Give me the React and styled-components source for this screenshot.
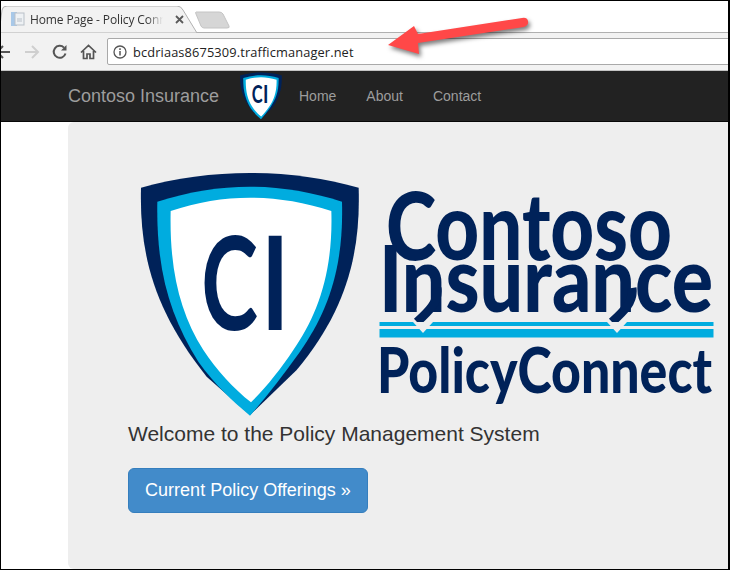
import React from "react";
import styled, { createGlobalStyle } from "styled-components";

const Global = createGlobalStyle`
  html, body { margin: 0; padding: 0; background: #fff; }
  * { box-sizing: border-box; }
`;
const Frame = styled.div`
  position: relative; width: 730px; height: 570px; overflow: hidden;
  display: flex; flex-direction: column;
  border: solid #000; border-width: 1px 2px 1px 1px;
  background: #fff; font-family: "Liberation Sans", Arial, sans-serif;
`;
const TabStrip = styled.div`
  height: 32px; flex: none; display: flex; align-items: flex-end;
  border-bottom: 1px solid #b0b0b0; background: #fff;
`;
const Tab = styled.div`
  position: relative; width: 197px; height: 27px; margin-bottom: -1px; flex: none;
  display: flex; align-items: center; padding: 0 0 1px 9px; gap: 4px;
`;
const TabShape = styled.svg`
  position: absolute; left: 0; top: 0;
`;
const TabIcon = styled.svg`
  position: relative; flex: none;
`;
const TabTitle = styled.span`
  position: relative; width: 133px; overflow: hidden; white-space: nowrap; flex: none;
  font: 12px "Open Sans", sans-serif; color: #333; letter-spacing: -0.01em;
  mask-image: linear-gradient(to right, #000 88%, transparent 100%);
`;
const TabClose = styled.svg`
  position: relative; flex: none; margin-left: 8px;
`;
const NewTab = styled.svg`
  flex: none; margin: 0 0 3px -3px;
`;
const Toolbar = styled.div`
  height: 38px; flex: none; display: flex; align-items: center; background: #f2f2f2;
  border-bottom: 1px solid #c4c4c4;
`;
const NavIcon = styled.svg`
  flex: none; margin-left: ${p => p.$ml}px;
`;
const AddressBar = styled.div`
  flex: 1; height: 27px; margin: 0 -4px 0 10px; display: flex; align-items: center;
  background: #fff; border: 1px solid #a9a9a9; border-radius: 2px; padding-left: 5px; gap: 6px;
`;
const Url = styled.span`
  font: 12.8px "Open Sans", sans-serif; color: #222; white-space: nowrap; letter-spacing: 0.01em;
`;
const Navbar = styled.nav`
  height: 51px; flex: none; display: flex; align-items: center; background: #222;
  border-bottom: 1px solid #080808; padding-left: 67px;
`;
const Brand = styled.span`
  font-size: 18px; color: #9d9d9d; width: 170px; flex: none;
`;
const NavLinks = styled.div`
  display: flex;
`;
const NavLink = styled.a`
  font-size: 14px; color: #9d9d9d; padding: 0 15px;
`;
const Main = styled.main`
  flex: 1; margin-left: 67px; background: #eee; border-radius: 6px 0 0 6px;
  padding: 48px 0 0 60px;
`;
const LogoRow = styled.div`
  display: flex; height: 249px; margin-left: 2px;
`;
const Wordmark = styled.svg`
  flex: none; margin-top: 10px;
`;
const Welcome = styled.p`
  margin: 0; font-size: 21px; line-height: 30px; color: #333; height: 30px;
`;
const Cta = styled.a`
  display: inline-flex; align-items: center; justify-content: center;
  width: 240px; height: 45px; margin-top: 19px;
  background: #428bca; border: 1px solid #357ebd; border-radius: 6px;
  color: #fff; font-size: 18px;
`;
const Arrow = styled.svg`
  position: absolute; left: 375px; top: 5px;
  filter: drop-shadow(2px 3px 2px rgba(0,0,0,.5));
`;

const Shield = ({ width, height }) => (
  <svg width={width} height={height} viewBox="0 0 720 750" preserveAspectRatio="none" style={{ flex: "none" }}>
    <path fill="#002259" d="M33 53C240 -6 480 -6 686 53C692 250 650 420 500 600L360 735L230 620C70 420 28 250 33 53Z" />
    <path fill="#00acdf" d="M82 95C270 35 450 35 636 95C642 300 590 430 510 545C460 615 410 680 360 737C310 695 255 645 205 575C120 440 78 300 82 95Z" />
    <path fill="#fff" d="M122 123C280 70 440 70 604 123C610 310 560 440 490 540C450 600 410 650 363 697C310 655 260 600 220 540C150 430 118 300 122 123Z" />
    <text x="214" y="480" fontFamily="Lato, sans-serif" fontWeight="700" fontSize="390" fill="#002259" textLength="170" lengthAdjust="spacingAndGlyphs">C</text>
    <text x="393" y="480" fontFamily="Lato, sans-serif" fontWeight="700" fontSize="390" fill="#002259" textLength="85" lengthAdjust="spacingAndGlyphs">I</text>
  </svg>
);

const Word = ({ x, y, size, len, children }) => (
  <text x={x} y={y} fontFamily="Lato, sans-serif" fontWeight="900" fontSize={size} fill="#002259" textLength={len} lengthAdjust="spacingAndGlyphs">{children}</text>
);

export default function App() {
  return (
    <Frame>
      <Global />
      <TabStrip>
        <Tab>
          <TabShape width="197" height="27" viewBox="0 0 197 27">
            <path d="M-2 27L1 4Q1.500 0 6 0H176Q180 0 182 4L196 27Z" fill="#f2f2f2" stroke="#b0b0b0" />
          </TabShape>
          <TabIcon width="16" height="16" viewBox="0 0 16 16">
            <rect x="1" y="1" width="6" height="14" fill="#a8c8e8" />
            <rect x="5" y="2" width="9" height="12" fill="#eef1f4" stroke="#b9c0c8" />
            <path d="M7 8h5M7 10h5" stroke="#b9c0c8" />
          </TabIcon>
          <TabTitle>Home Page - Policy Connect</TabTitle>
          <TabClose width="9" height="9" viewBox="0 0 9 9">
            <path d="M1 1L8 8M8 1L1 8" stroke="#5a5a5a" strokeWidth="1.800" />
          </TabClose>
        </Tab>
        <NewTab width="36" height="18" viewBox="0 0 36 18">
          <path d="M1 1H24Q27 1 28 3L34 15Q35 17 32 17H9Q7 17 6 15L1 3Q0 1 1 1Z" fill="#d6d6d6" stroke="#c4c4c4" />
        </NewTab>
      </TabStrip>
      <Toolbar>
        <NavIcon $ml={-7} width="18" height="16" viewBox="0 0 18 16" fill="none" stroke="#555" strokeWidth="2">
          <path d="M16 8H3M9 2L3 8L9 14" />
        </NavIcon>
        <NavIcon $ml={11} width="18" height="16" viewBox="0 0 18 16" fill="none" stroke="#cfcfcf" strokeWidth="2">
          <path d="M2 8H15M9 2L15 8L9 14" />
        </NavIcon>
        <NavIcon $ml={11} width="16" height="16" viewBox="0 0 16 16" fill="none" stroke="#555" strokeWidth="2">
          <path d="M13.500 9.500A6 6 0 1 1 12 3.600" />
          <path d="M14.500 1V6.500H9" fill="#555" stroke="none" />
        </NavIcon>
        <NavIcon $ml={12} width="17" height="16" viewBox="0 0 17 16" fill="none" stroke="#555" strokeWidth="1.700">
          <path d="M1 8.500L8.500 1.500L16 8.500M3.500 7V14.500H7V10H10V14.500H13.500V7" />
        </NavIcon>
        <AddressBar>
          <svg width="14" height="14" viewBox="0 0 14 14" style={{ flex: "none" }}>
            <circle cx="7" cy="7" r="6" fill="none" stroke="#555" strokeWidth="1.300" />
            <path d="M7 6V10.500M7 3.300V5" stroke="#555" strokeWidth="1.500" />
          </svg>
          <Url>bcdriaas8675309.trafficmanager.net</Url>
        </AddressBar>
      </Toolbar>
      <Navbar>
        <Brand>Contoso Insurance</Brand>
        <Shield width={46} height={48} />
        <NavLinks>
          <NavLink>Home</NavLink>
          <NavLink>About</NavLink>
          <NavLink>Contact</NavLink>
        </NavLinks>
      </Navbar>
      <Main>
        <LogoRow>
          <Shield width={240} height={250} />
          <Wordmark width="350" height="240" viewBox="0 0 350 240">
            <Word x={16} y={80} size={93} len={286}>Contoso</Word>
            <Word x={9} y={132} size={92} len={334}>Insurance</Word>
            <path d="M67 108C69 122 58 132 47 142M262 108C264 122 253 132 242 142" fill="none" stroke="#002259" strokeWidth="9" />
            <rect x="9.500" y="142" width="334" height="4" fill="#00acdf" />
            <rect x="9.500" y="149" width="334" height="8.500" fill="#00acdf" />
            <path d="M43 142L53 153L63 142ZM237 142L247 153L257 142Z" fill="#eee" />
            <Word x={7} y={213} size={63} len={335}>PolicyConnect</Word>
          </Wordmark>
        </LogoRow>
        <Welcome>Welcome to the Policy Management System</Welcome>
        <Cta>Current Policy Offerings »</Cta>
      </Main>
      <Arrow width="170" height="65" viewBox="0 0 170 65">
        <path d="M146 12L42 28L38 20L12 39L43 48L42 37L148 21Q153 19 152 15Q151 11 146 12Z" fill="#ff4848" />
      </Arrow>
    </Frame>
  );
}
